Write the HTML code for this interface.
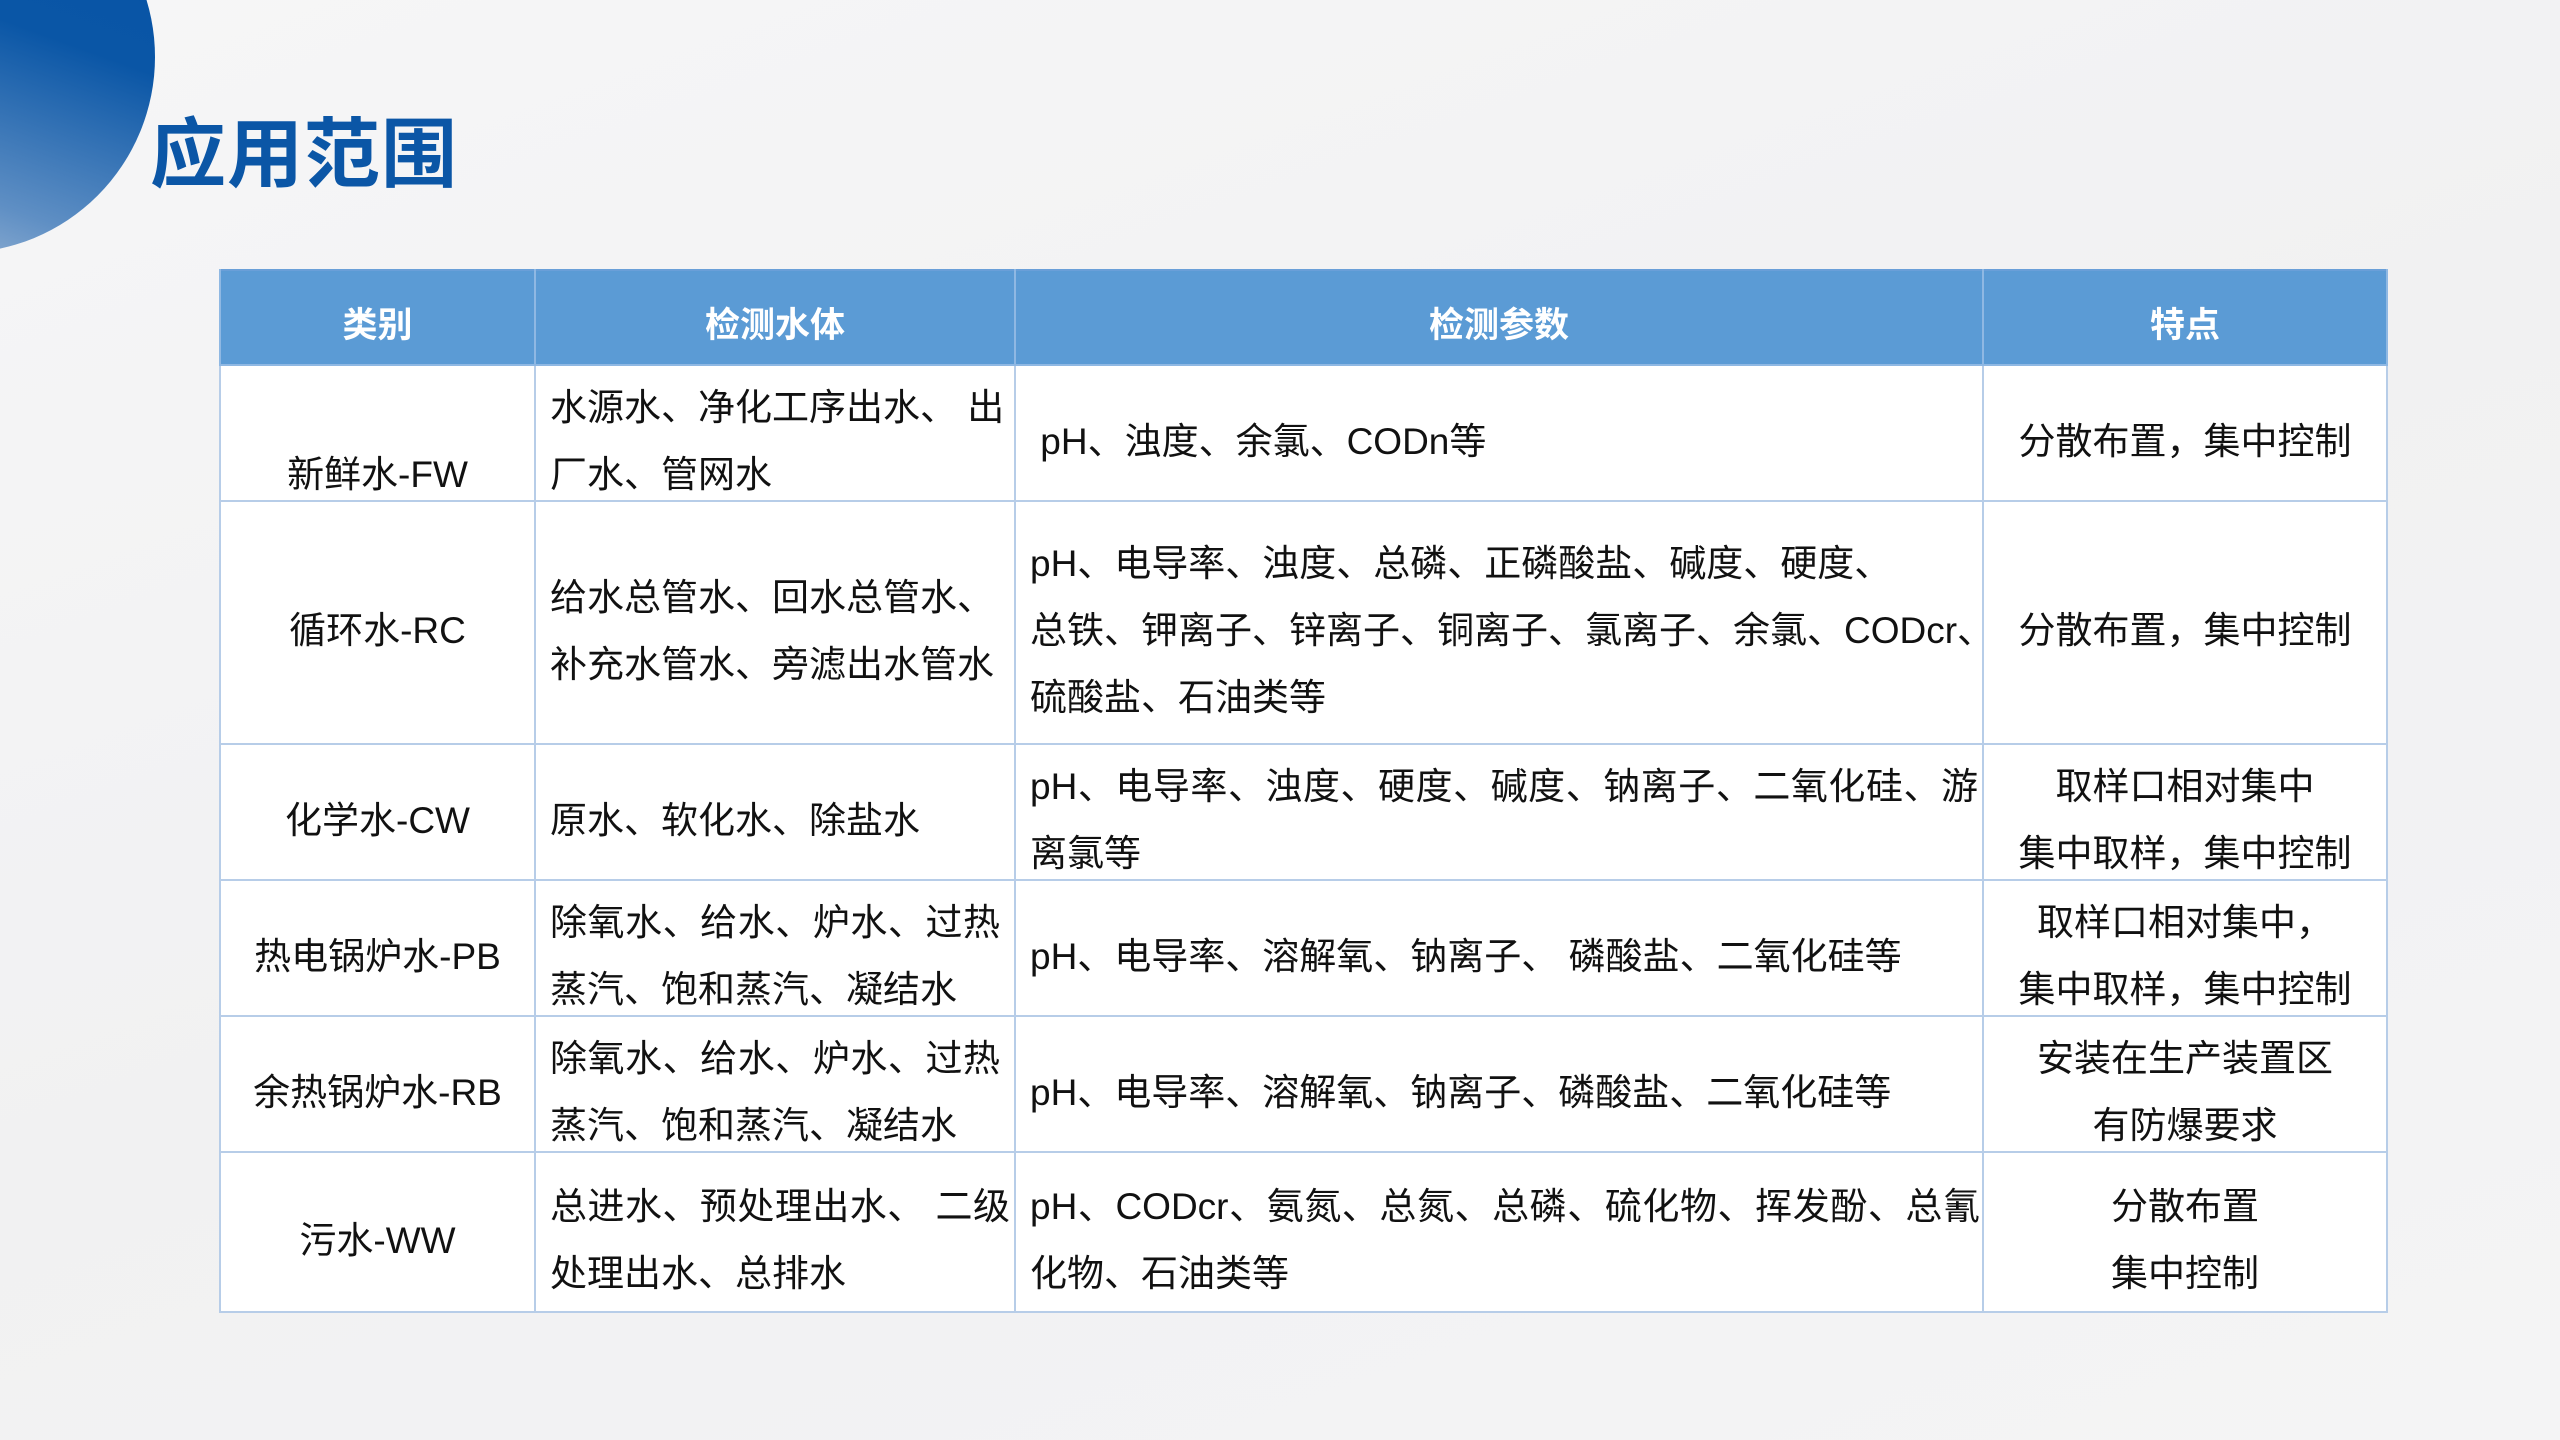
<!DOCTYPE html>
<html><head><meta charset="utf-8"><style>
html,body{margin:0;padding:0}
body{width:2560px;height:1440px;overflow:hidden;position:relative;background:linear-gradient(160deg,#f6f6f7 0%,#f1f1f2 50%,#f4f4f5 100%);font-family:"Liberation Sans","Noto Sans CJK SC",sans-serif}
.circle{position:absolute;left:-237px;top:-139px;width:392px;height:392px;border-radius:50%;background:linear-gradient(200deg,#0652a6 0%,#0a56a6 40%,#5f8fc4 75%,#b7c9de 100%)}
.title{position:absolute;left:150px;top:98px;font-size:76px;font-weight:bold;color:#0b56a6;letter-spacing:1px;line-height:100px;font-family:"Noto Sans CJK SC",sans-serif}
table{position:absolute;left:219px;top:269px;width:2167px;border-collapse:collapse;table-layout:fixed;background:#fff;border:2px solid #6a9fd8}
td,th{border:2px solid #b7cde8;font-size:37px;line-height:67px;color:#111;padding:0 14px;font-family:"Liberation Sans","Noto Sans CJK SC",sans-serif;font-weight:normal}
th{background:#5b9bd5;color:#fff;font-weight:bold;height:93px;font-size:35px;border-color:#8fb8e3;border-top:none}
td>div,th>div{position:relative;top:8px}
td.c{text-align:center}
td.j{text-align:justify}
.jl{display:block;text-align:justify;text-align-last:justify;white-space:nowrap}
</style></head><body>
<div class="circle"></div>
<div class="title">应用范围</div>
<table>
<colgroup><col style="width:315px"><col style="width:480px"><col style="width:968px"><col style="width:404px"></colgroup>
<tr><th><div>类别</div></th><th><div>检测水体</div></th><th><div>检测参数</div></th><th><div>特点</div></th></tr>
<tr style="height:136px"><td class="c" style="vertical-align:bottom"><div style="top:8px;margin-top:-8px">新鲜水-FW</div></td><td style="padding-right:10px"><div><span class="jl">水源水、净化工序出水、 出</span>厂水、管网水</div></td><td><div>&nbsp;pH、浊度、余氯、CODn等</div></td><td class="c"><div>分散布置，集中控制</div></td></tr>
<tr style="height:243px"><td class="c"><div>循环水-RC</div></td><td><div>给水总管水、回水总管水、补充水管水、旁滤出水管水</div></td><td style="padding-right:0;white-space:nowrap"><div>pH、电导率、浊度、总磷、正磷酸盐、碱度、硬度、<br>总铁、钾离子、锌离子、铜离子、氯离子、余氯、CODcr、<br>硫酸盐、石油类等</div></td><td class="c"><div>分散布置，集中控制</div></td></tr>
<tr style="height:136px"><td class="c"><div>化学水-CW</div></td><td><div>原水、软化水、除盐水</div></td><td class="j" style="padding-right:4px"><div>pH、电导率、浊度、硬度、碱度、钠离子、二氧化硅、游离氯等</div></td><td class="c"><div>取样口相对集中<br>集中取样，集中控制</div></td></tr>
<tr style="height:134px"><td class="c" style="padding:0"><div>热电锅炉水-PB</div></td><td class="j"><div>除氧水、给水、炉水、过热蒸汽、饱和蒸汽、凝结水</div></td><td><div>pH、电导率、溶解氧、钠离子、 磷酸盐、二氧化硅等</div></td><td class="c"><div>取样口相对集中，<br>集中取样，集中控制</div></td></tr>
<tr style="height:136px"><td class="c" style="padding:0"><div>余热锅炉水-RB</div></td><td class="j"><div>除氧水、给水、炉水、过热蒸汽、饱和蒸汽、凝结水</div></td><td><div>pH、电导率、溶解氧、钠离子、磷酸盐、二氧化硅等</div></td><td class="c"><div>安装在生产装置区<br>有防爆要求</div></td></tr>
<tr style="height:160px"><td class="c"><div>污水-WW</div></td><td class="j" style="padding-right:4px"><div>总进水、预处理出水、 二级处理出水、总排水</div></td><td class="j" style="padding-right:2px"><div>pH、CODcr、氨氮、总氮、总磷、硫化物、挥发酚、总氰化物、石油类等</div></td><td class="c"><div>分散布置<br>集中控制</div></td></tr>
</table>
</body></html>
